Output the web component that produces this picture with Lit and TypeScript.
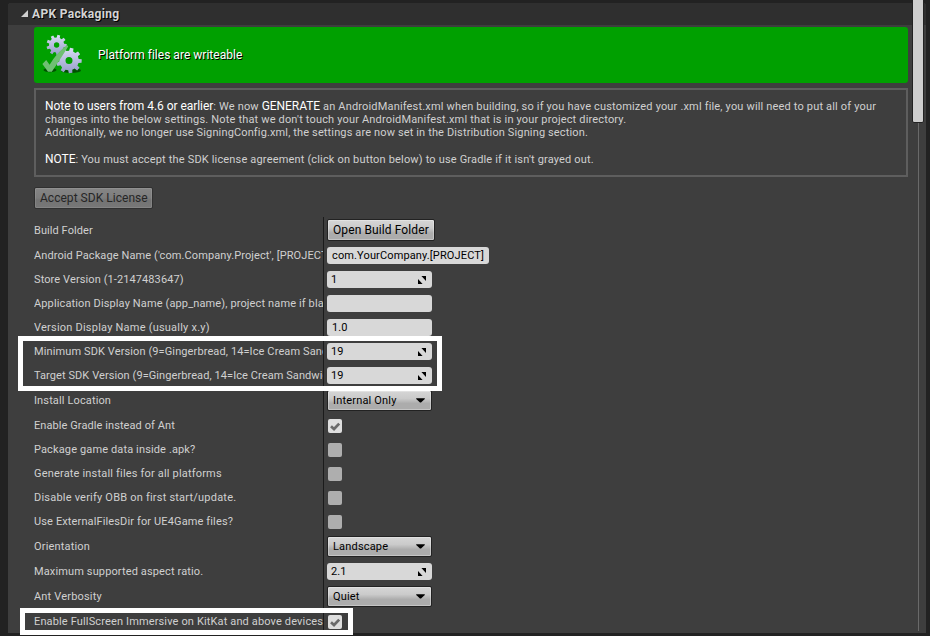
import { LitElement, html, css, svg } from "lit";
import { customElement, property } from "lit/decorators.js";
import { styleMap } from "lit/directives/style-map.js";

type Kind = "button" | "text" | "number" | "combo" | "check";
interface Row {
  label: string;
  kind: Kind;
  value?: string;
  wide?: boolean;
  checked?: boolean;
  /** Label letter spacing in pixels, where it differs from the default. */
  tracking?: number;
}

const ROWS: Row[] = [
  { label: "Build Folder", kind: "button", value: "Open Build Folder", tracking: 0.07 },
  { label: "Android Package Name ('com.Company.Project', [PROJECT", kind: "text", value: "com.YourCompany.[PROJECT]", wide: true, tracking: 0.1 },
  { label: "Store Version (1-2147483647)", kind: "number", value: "1", tracking: 0.1 },
  { label: "Application Display Name (app_name), project name if blan", kind: "text", value: "" },
  { label: "Version Display Name (usually x.y)", kind: "text", value: "1.0", tracking: 0.22 },
  { label: "Minimum SDK Version (9=Gingerbread, 14=Ice Cream Sand", kind: "number", value: "19", tracking: 0.11 },
  { label: "Target SDK Version (9=Gingerbread, 14=Ice Cream Sandwic", kind: "number", value: "19", tracking: 0.08 },
  { label: "Install Location", kind: "combo", value: "Internal Only" },
  { label: "Enable Gradle instead of Ant", kind: "check", checked: true, tracking: 0.08 },
  { label: "Package game data inside .apk?", kind: "check" },
  { label: "Generate install files for all platforms", kind: "check", tracking: 0.18 },
  { label: "Disable verify OBB on first start/update.", kind: "check", tracking: 0.21 },
  { label: "Use ExternalFilesDir for UE4Game files?", kind: "check" },
  { label: "Orientation", kind: "combo", value: "Landscape", tracking: 0.18 },
  { label: "Maximum supported aspect ratio.", kind: "number", value: "2.1" },
  { label: "Ant Verbosity", kind: "combo", value: "Quiet", tracking: 0.18 },
  { label: "Enable FullScreen Immersive on KitKat and above devices", kind: "check", checked: true, tracking: 0.14 },
];

/** Outline of a toothed wheel with a round hole, drawn with the even-odd rule. */
function gear(cx: number, cy: number, outer: number, inner: number, hole: number, teeth: number, turn: number): string {
  const step = (Math.PI * 2) / teeth;
  const at = (r: number, a: number) => `${(cx + r * Math.cos(a)).toFixed(2)} ${(cy + r * Math.sin(a)).toFixed(2)}`;
  const pts: string[] = [];
  for (let i = 0; i < teeth; i++) {
    const a = turn + i * step;
    pts.push(at(inner, a - step * 0.3), at(outer, a - step * 0.2), at(outer, a + step * 0.2), at(inner, a + step * 0.3));
  }
  return `M${pts.join("L")}Z M${cx - hole} ${cy}a${hole} ${hole} 0 1 0 ${hole * 2} 0a${hole} ${hole} 0 1 0 ${-hole * 2} 0Z`;
}

@customElement("setting-row")
class SettingRow extends LitElement {
  @property({ attribute: false }) row!: Row;

  static styles = css`
    :host { display: flex; height: 24px; flex: none; }
    :host([tall]) { height: 26px; }
    .label {
      width: 289px; flex: none; overflow: hidden; white-space: nowrap;
      line-height: 26px; color: #d0d0d0;
    }
    :host([tall]) .label { line-height: 28px; }
    .cell { flex: 1; border-left: 1px solid #1b1b1b; display: flex; align-items: flex-start; padding-left: 3px; }
    .field, .btn { box-sizing: border-box; display: flex; align-items: center; justify-content: space-between; white-space: nowrap; color: #000; }
    .field {
      width: 105px; height: 17px; margin-top: 4px; padding: 0 6px 0 4px;
      background: #d8d8d8; border-radius: 3px; letter-spacing: 0.13px;
    }
    .field.plain { padding-left: 5px; }
    .field.wide { width: 162px; padding-right: 0; }
    .btn {
      border: 1px solid #222; border-radius: 2px;
      background: linear-gradient(#d6d6d6, #cacaca 40%, #acacac 65%, #acacac);
      box-shadow: inset 0 0 0 1px rgba(255, 255, 255, 0.3);
    }
    .btn.combo { width: 105px; height: 21px; margin-top: 3px; padding: 0 6px 0 5px; letter-spacing: 0.18px; }
    .btn.push { width: 108px; height: 22px; margin-top: 2px; padding: 0 0 0 5px; font-size: 12px; letter-spacing: 0.1px; }
    .check { width: 14px; height: 14px; margin: 6px 0 0 1px; border-radius: 2px; background: #aeaeae; }
    .check.on { background: #dedede; }
    svg { display: block; }
  `;

  private control() {
    const r = this.row;
    switch (r.kind) {
      case "button":
        return html`<div class="btn push">${r.value}</div>`;
      case "text":
        return html`<div class="field plain ${r.wide ? "wide" : ""}">${r.value}</div>`;
      case "number":
        return html`<div class="field"><span>${r.value}</span>
          <svg width="8" height="8" viewBox="0 0 8 8"><path d="M3.4 0H8V5ZM0 3L4.6 8H0Z" fill="#000"/></svg></div>`;
      case "combo":
        return html`<div class="btn combo"><span>${r.value}</span>
          <svg width="9" height="5" viewBox="0 0 9 5"><path d="M0.2 0.3H8.8V1L5 4.6H4L0.2 1Z" fill="#000"/></svg></div>`;
      case "check":
        return html`<div class="check ${r.checked ? "on" : ""}">${r.checked
          ? html`<svg width="14" height="14" viewBox="0 0 14 14"><path d="M3 7.3L6 10L11.2 4.6" fill="none" stroke="#6a6a6a" stroke-width="2.7"/></svg>`
          : ""}</div>`;
    }
  }

  render() {
    return html`<div class="label" style=${styleMap({ letterSpacing: `${this.row.tracking ?? 0.13}px` })}>${this.row.label}</div>
      <div class="cell">${this.control()}</div>`;
  }
}

@customElement("app-root")
class AppRoot extends LitElement {
  static styles = css`
    :host {
      display: block; position: relative; box-sizing: border-box; width: 930px; height: 636px; overflow: hidden;
      background: #222; padding: 3px 4px 3px 8px; font: 11px Roboto, "Liberation Sans", sans-serif; color: #d0d0d0;
    }
    .panel { height: 630px; background: #3e3e3e; border-radius: 3px 3px 0 0; overflow: hidden; display: flex; flex-direction: column; }
    .header { height: 22px; flex: none; background: #2f2f2f; display: flex; align-items: center; padding-left: 13px; }
    .header svg { margin-top: -2px; }
    .title { margin-left: 4px; font-size: 12px; font-weight: 700; text-shadow: 1px 1px 0 #000; color: #d4d4d4; letter-spacing: 0.32px; }
    .body { width: 874px; margin-left: 26px; display: flex; flex-direction: column; }
    .banner { height: 56px; margin-top: 2px; flex: none; border-radius: 3px; background: #00a000; display: flex; align-items: center; }
    .banner svg { margin-left: 6px; }
    .status { margin-left: 12px; font-size: 12px; color: #fff; text-shadow: 1px 1px 0 #000; letter-spacing: 0.02px; }
    .note { box-sizing: border-box; height: 89px; margin-top: 5px; flex: none; border: 2px solid #5e5e5e; padding: 9px 9px 0; white-space: nowrap; letter-spacing: 0.17px; }
    .line { height: 13px; line-height: 14px; }
    .line.second { margin-top: 1px; }
    .line.third { letter-spacing: 0.135px; }
    .line.last { margin-top: 13px; }
    .strong { font-size: 12px; color: #fff; letter-spacing: -0.05px; }
    .accept {
      box-sizing: border-box; width: 119px; height: 22px; margin-top: 10px; flex: none; padding-left: 5px;
      border: 1px solid #303030; border-radius: 2px; background: linear-gradient(#858585, #7d7d7d 50%, #737373 60%, #777);
      box-shadow: inset 0 0 0 1px rgba(255, 255, 255, 0.1);
      font-size: 12px; line-height: 20px; color: #262626; white-space: nowrap; letter-spacing: 0.03px;
    }
    .rows { margin-top: 8px; display: flex; flex-direction: column; }
    .thumb { position: absolute; left: 912px; top: -2px; width: 10px; height: 123px; border: 1px solid #222; border-radius: 2px; background: #cecece; }
    .track { position: absolute; left: 918px; top: 123px; width: 1px; height: 508px; background: #6a6a6a; }
    .mark { position: absolute; box-sizing: border-box; border: 5px solid #fff; }
    .sdk { left: 18px; top: 336px; width: 424px; height: 55px; }
    .immersive { left: 20px; top: 608px; width: 333px; height: 27px; }
  `;

  private icon() {
    return html`<svg width="46" height="48" viewBox="40 31 46 48">
      <defs>
        <linearGradient id="g" x1="0" y1="0" x2="0" y2="1"><stop offset="0" stop-color="#d9ddf5"/><stop offset="1" stop-color="#949cc8"/></linearGradient>
      </defs>
      ${svg`<ellipse cx="50" cy="70" rx="6.5" ry="2.2" fill="#003800" opacity=".75"/>
      <ellipse cx="71" cy="70.5" rx="10" ry="2.4" fill="#003800" opacity=".75"/>
      <path fill="url(#g)" fill-rule="evenodd" d="${gear(56.6, 45, 10.2, 7.6, 2.7, 9, -1.35)}"/>
      <path fill="url(#g)" fill-rule="evenodd" d="${gear(69, 60.5, 12.8, 9.8, 3.5, 9, -1.35)}"/>
      <path fill="#6fbf73" d="M42.4 64L46.2 60 49.6 64.8Q56 53.5 67 45L68.2 46.6Q61.5 57.5 51.8 71.8L48 71.8Z"/>`}
    </svg>`;
  }

  render() {
    return html`
      <div class="panel">
        <div class="header">
          <svg width="7" height="7" viewBox="0 0 7 7"><path d="M7 0V7H0Z" fill="#d0d0d0"/></svg>
          <span class="title">APK Packaging</span>
        </div>
        <div class="body">
          <div class="banner">${this.icon()}<span class="status">Platform files are writeable</span></div>
          <div class="note">
            <div class="line"><span class="strong">Note to users from 4.6 or earlier</span>: We now <span class="strong">GENERATE</span> an AndroidManifest.xml when building, so if you have customized your .xml file, you will need to put all of your</div>
            <div class="line second">changes into the below settings. Note that we don't touch your AndroidManifest.xml that is in your project directory.</div>
            <div class="line third">Additionally, we no longer use SigningConfig.xml, the settings are now set in the Distribution Signing section.</div>
            <div class="line last"><span class="strong">NOTE</span>: You must accept the SDK license agreement (click on button below) to use Gradle if it isn't grayed out.</div>
          </div>
          <div class="accept">Accept SDK License</div>
          <div class="rows">
            ${ROWS.map((r) => html`<setting-row .row=${r} ?tall=${r.kind === "button" || r.kind === "combo"}></setting-row>`)}
          </div>
        </div>
      </div>
      <div class="track"></div>
      <div class="thumb"></div>
      <div class="mark sdk"></div>
      <div class="mark immersive"></div>
    `;
  }
}
